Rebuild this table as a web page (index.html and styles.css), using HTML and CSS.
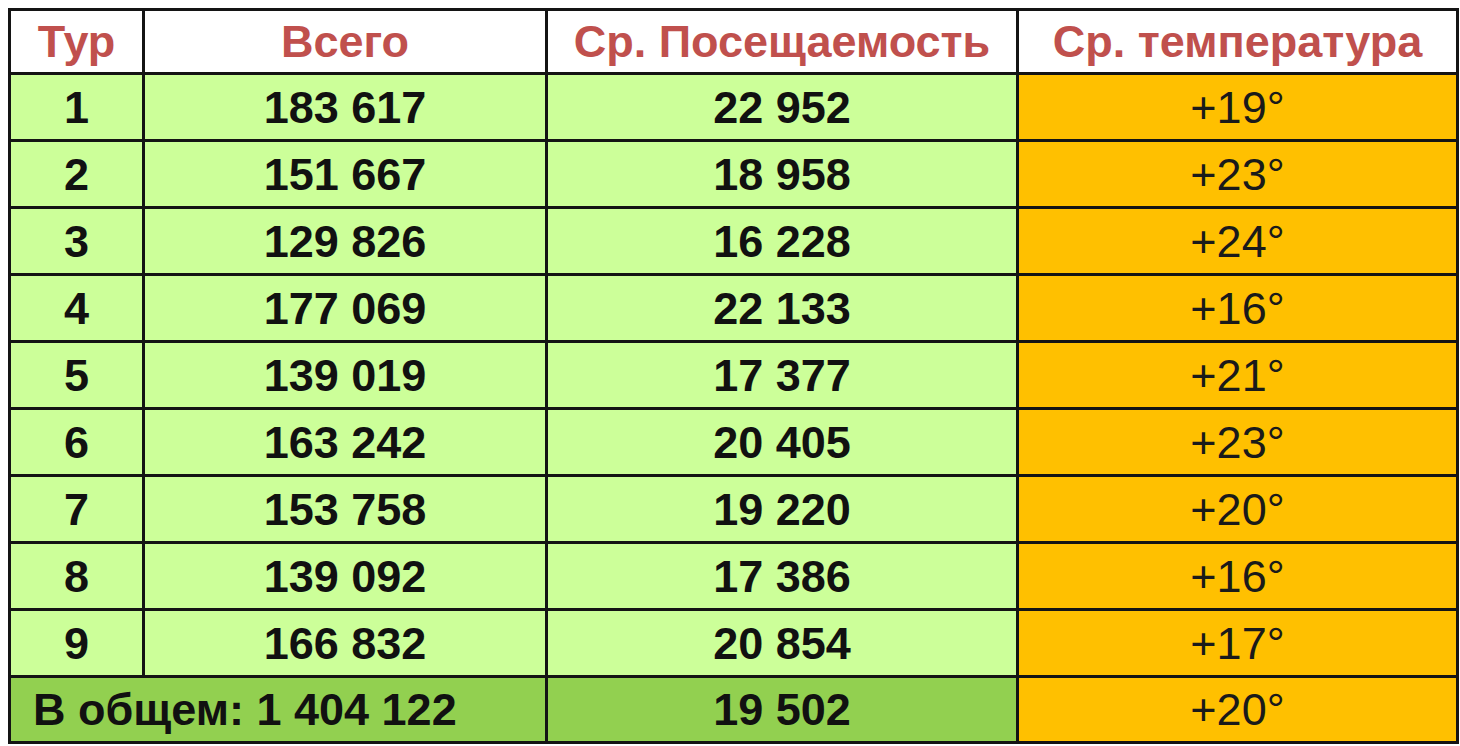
FILE: index.html
```html
<!DOCTYPE html>
<html lang="ru">
<head>
<meta charset="utf-8">
<title>Посещаемость</title>
<link rel="stylesheet" href="styles.css">
</head>
<body>
<table class="stats">
  <colgroup>
    <col class="c-tour">
    <col class="c-total">
    <col class="c-avg">
    <col class="c-temp">
  </colgroup>
  <thead>
    <tr class="head">
      <th>Тур</th>
      <th>Всего</th>
      <th>Ср. Посещаемость</th>
      <th>Ср. температура</th>
    </tr>
  </thead>
  <tbody>
    <tr class="row"><td>1</td><td>183 617</td><td>22 952</td><td class="temp">+19°</td></tr>
    <tr class="row"><td>2</td><td>151 667</td><td>18 958</td><td class="temp">+23°</td></tr>
    <tr class="row"><td>3</td><td>129 826</td><td>16 228</td><td class="temp">+24°</td></tr>
    <tr class="row"><td>4</td><td>177 069</td><td>22 133</td><td class="temp">+16°</td></tr>
    <tr class="row"><td>5</td><td>139 019</td><td>17 377</td><td class="temp">+21°</td></tr>
    <tr class="row"><td>6</td><td>163 242</td><td>20 405</td><td class="temp">+23°</td></tr>
    <tr class="row"><td>7</td><td>153 758</td><td>19 220</td><td class="temp">+20°</td></tr>
    <tr class="row"><td>8</td><td>139 092</td><td>17 386</td><td class="temp">+16°</td></tr>
    <tr class="row"><td>9</td><td>166 832</td><td>20 854</td><td class="temp">+17°</td></tr>
  </tbody>
  <tfoot>
    <tr class="total">
      <td colspan="2" class="total-label">В общем: 1 404 122</td>
      <td>19 502</td>
      <td class="temp">+20°</td>
    </tr>
  </tfoot>
</table>
</body>
</html>
```

FILE: styles.css
```css
html, body {
  margin: 0;
  background: #ffffff;
}
body {
  padding: 8px;
}
.stats {
  border-collapse: collapse;
  table-layout: fixed;
  width: 1448px;
  font-family: "Liberation Sans", Arial, sans-serif;
  font-weight: bold;
  font-size: 45px;
  color: #111;
}
.c-tour { width: 134px; }
.c-total { width: 403px; }
.c-avg { width: 471px; }
.c-temp { width: 440px; }
.stats th,
.stats td {
  border: 3px solid #141414;
  padding: 0;
  text-align: center;
  vertical-align: middle;
  line-height: 1;
  white-space: nowrap;
  overflow: hidden;
}
.head th {
  height: 61px;
  background: #ffffff;
  color: #c0504d;
}
.row td {
  height: 64px;
  background: #ccff99;
}
.total td {
  height: 63px;
  background: #92d050;
}
.stats td.temp {
  background: #ffc000;
  font-weight: normal;
  color: #1a1a1a;
}
.stats td.total-label {
  text-align: left;
  padding-left: 22px;
}
```
